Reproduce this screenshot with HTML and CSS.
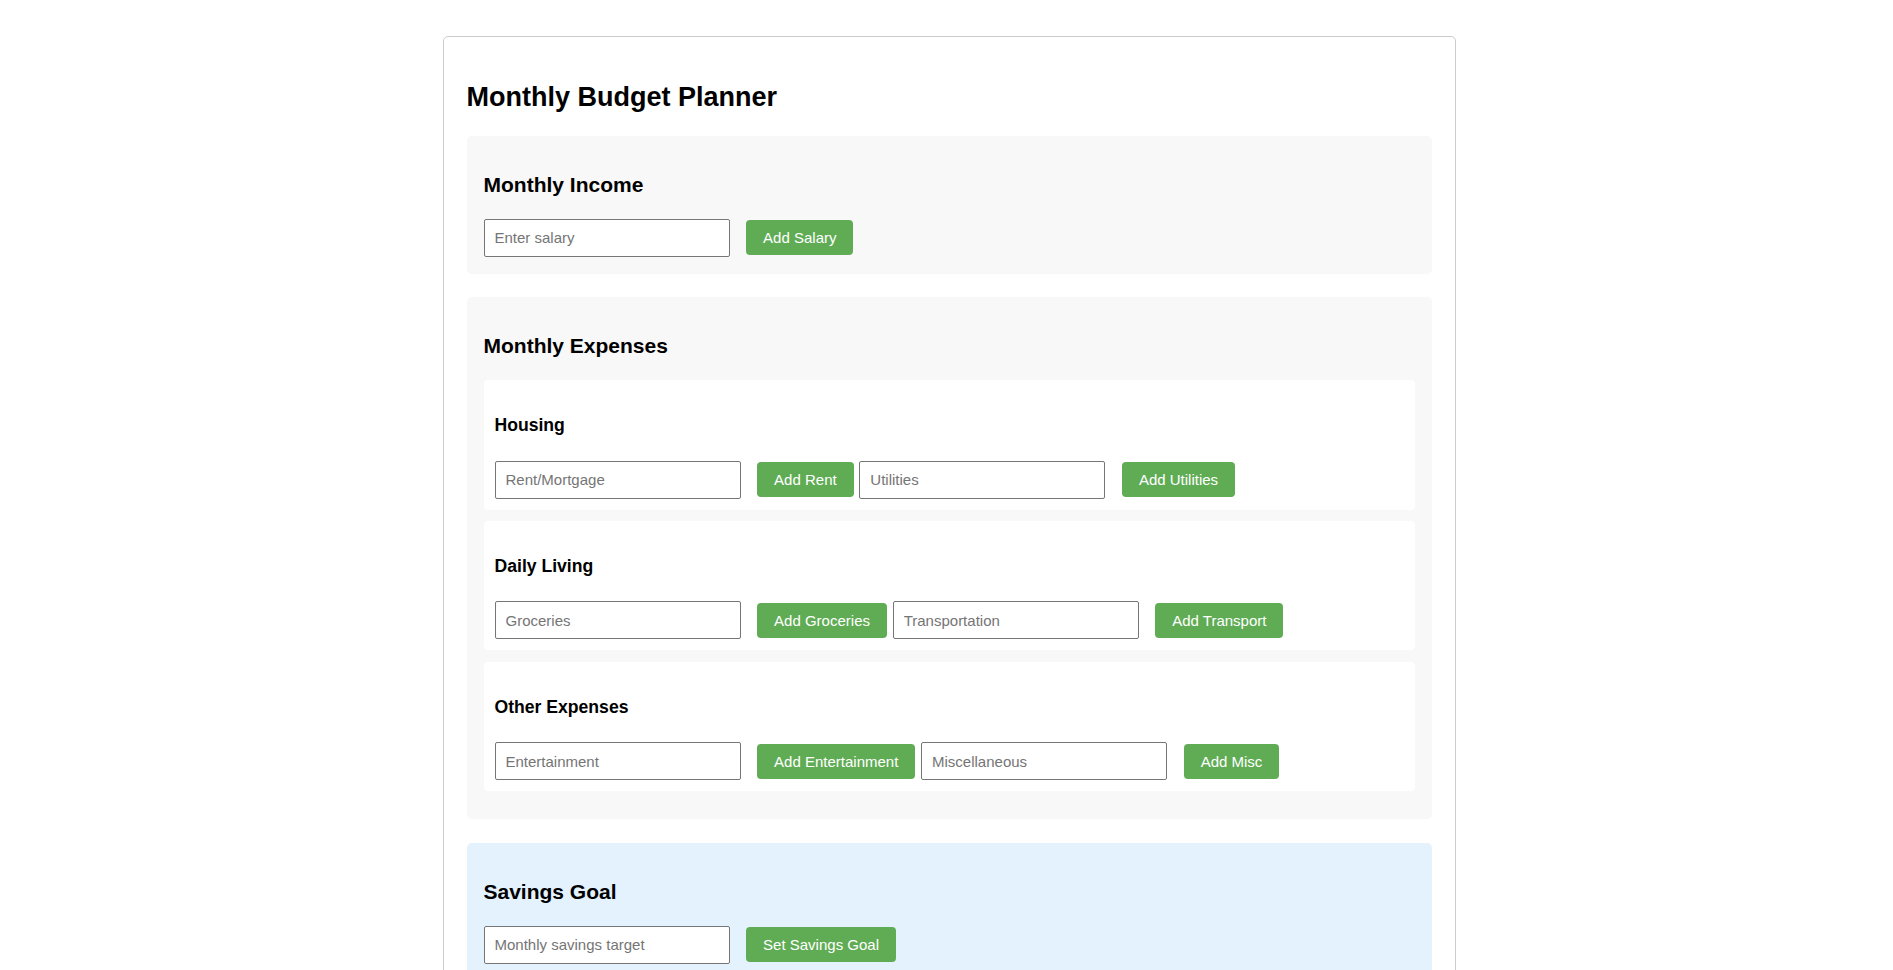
FILE: index.html
```html
<!DOCTYPE html>
<html lang="en">
<head>
<meta charset="utf-8">
<title>Monthly Budget Planner</title>
<link rel="stylesheet" href="styles.css">
</head>
<body>
<div class="planner">
  <h1 class="planner-title">Monthly Budget Planner</h1>

  <section class="panel">
    <h2 class="panel-title">Monthly Income</h2>
    <div class="row">
      <input class="field" type="number" placeholder="Enter salary">
      <button class="btn">Add Salary</button>
    </div>
  </section>

  <section class="panel">
    <h2 class="panel-title">Monthly Expenses</h2>

    <div class="card">
      <h3 class="card-title">Housing</h3>
      <div class="row">
        <input class="field" type="number" placeholder="Rent/Mortgage">
        <button class="btn">Add Rent</button>
        <input class="field" type="number" placeholder="Utilities">
        <button class="btn">Add Utilities</button>
      </div>
    </div>

    <div class="card">
      <h3 class="card-title">Daily Living</h3>
      <div class="row">
        <input class="field" type="number" placeholder="Groceries">
        <button class="btn">Add Groceries</button>
        <input class="field" type="number" placeholder="Transportation">
        <button class="btn">Add Transport</button>
      </div>
    </div>

    <div class="card">
      <h3 class="card-title">Other Expenses</h3>
      <div class="row">
        <input class="field" type="number" placeholder="Entertainment">
        <button class="btn">Add Entertainment</button>
        <input class="field" type="number" placeholder="Miscellaneous">
        <button class="btn">Add Misc</button>
      </div>
    </div>
  </section>

  <section class="panel panel-savings">
    <h2 class="panel-title">Savings Goal</h2>
    <div class="row">
      <input class="field" type="number" placeholder="Monthly savings target">
      <button class="btn">Set Savings Goal</button>
    </div>
  </section>
</div>
</body>
</html>
```

FILE: styles.css
```css
* {
  box-sizing: border-box;
}

html, body {
  background: #ffffff;
}

body {
  margin: 0;
  padding: 36px 0 40px 5px;
  font-family: "Liberation Sans", Arial, sans-serif;
  color: #000;
}

.planner {
  width: 1013px;
  margin: 0 auto;
  padding: 23px;
  border: 1px solid #cccccc;
  border-radius: 5px;
  background: #fff;
}

.planner-title {
  font-size: 27px;
  line-height: 31px;
  font-weight: bold;
  margin: 22px 0 22.5px;
}

.panel {
  background: #f8f8f8;
  border-radius: 5px;
  padding: 20px 17px 17px;
  margin-bottom: 23.5px;
}

.panel-savings {
  background: #e3f2fd;
}

.panel-title {
  font-size: 21px;
  line-height: 24px;
  font-weight: bold;
  margin: 17px 0 22px;
}

.card {
  background: #ffffff;
  border-radius: 4px;
  padding: 11px;
  margin-bottom: 11.3px;
}

.card-title {
  font-size: 17.6px;
  line-height: 20px;
  font-weight: bold;
  margin: 24px 0 25.5px;
}

.row {
  display: flex;
  align-items: center;
}

.field {
  width: 246px;
  height: 38px;
  padding: 0 10px;
  border: 1px solid #767676;
  border-radius: 2px;
  background: #fff;
  font-family: "Liberation Sans", Arial, sans-serif;
  font-size: 15px;
  color: #000;
  margin-right: 16.6px;
  -moz-appearance: textfield;
}

.field::-webkit-outer-spin-button,
.field::-webkit-inner-spin-button {
  -webkit-appearance: none;
  margin: 0;
}

.field::placeholder {
  color: #757575;
}

.btn {
  height: 35px;
  padding: 0 17px;
  border: none;
  border-radius: 4px;
  background: #5fac55;
  color: #ffffff;
  font-family: "Liberation Sans", Arial, sans-serif;
  font-size: 15px;
  margin-right: 5.7px;
  cursor: pointer;
}
```
